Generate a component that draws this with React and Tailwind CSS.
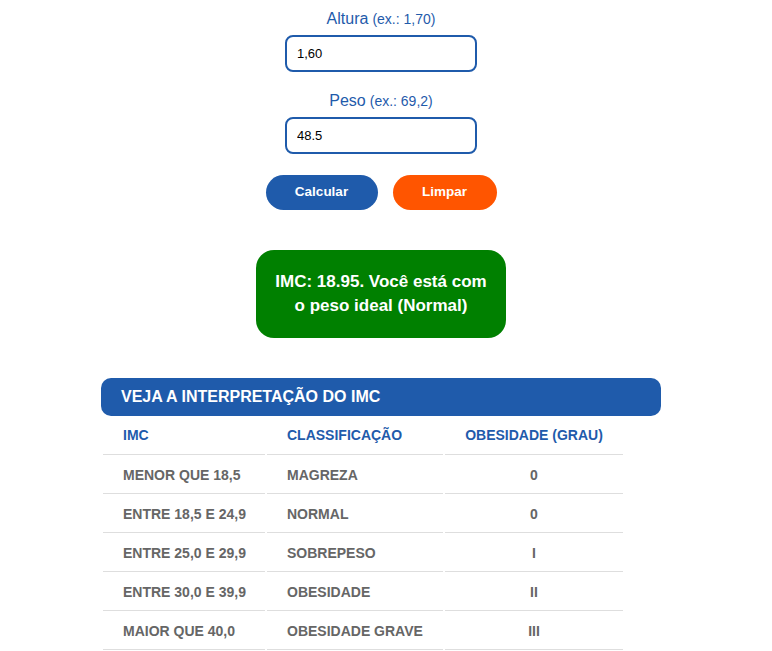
import { useState } from 'react';

const ROWS = [
  { imc: 'MENOR QUE 18,5', cls: 'MAGREZA', grau: '0' },
  { imc: 'ENTRE 18,5 E 24,9', cls: 'NORMAL', grau: '0' },
  { imc: 'ENTRE 25,0 E 29,9', cls: 'SOBREPESO', grau: 'I' },
  { imc: 'ENTRE 30,0 E 39,9', cls: 'OBESIDADE', grau: 'II' },
  { imc: 'MAIOR QUE 40,0', cls: 'OBESIDADE GRAVE', grau: 'III' },
];

export default function App() {
  const [altura, setAltura] = useState('1,60');
  const [peso, setPeso] = useState('48.5');

  return (
    <div className="w-[762px] bg-white font-['Liberation_Sans',Arial,sans-serif] flex flex-col items-center pt-[10px] pb-4">
      <label className="flex items-baseline gap-[4px] h-[18px] text-[16px] leading-[18px] text-[#1f5bab]">
        Altura <span className="text-[14px] leading-[18px]">(ex.: 1,70)</span>
      </label>
      <input
        type="text"
        value={altura}
        onChange={e => setAltura(e.target.value)}
        className="mt-[7px] w-[192px] h-[37px] border-2 border-[#1f5bab] rounded-[8px] pl-[10px] text-[13px] text-black outline-none"
      />

      <label className="mt-[20px] flex items-baseline gap-[4px] h-[18px] text-[16px] leading-[18px] text-[#1f5bab]">
        Peso <span className="text-[14px] leading-[18px]">(ex.: 69,2)</span>
      </label>
      <input
        type="text"
        value={peso}
        onChange={e => setPeso(e.target.value)}
        className="mt-[7px] w-[192px] h-[37px] border-2 border-[#1f5bab] rounded-[8px] pl-[10px] text-[13px] text-black outline-none"
      />

      <div className="mt-[21px] flex gap-[15px]">
        <button className="w-[112px] h-[35px] rounded-full bg-[#1f5bab] text-white text-[13.5px] font-bold">
          Calcular
        </button>
        <button className="w-[104px] h-[35px] rounded-full bg-[#ff5500] text-white text-[13.5px] font-bold">
          Limpar
        </button>
      </div>

      <div className="mt-[40px] w-[250px] h-[88px] rounded-[18px] bg-[#008000] text-white text-[17px] leading-[24px] font-bold text-center flex items-center justify-center px-4">
        IMC: 18.95. Você está com o peso ideal (Normal)
      </div>

      <div className="mt-[40px] w-[560px]">
        <div className="h-[38px] rounded-[10px] bg-[#1f5bab] text-white text-[16px] font-bold flex items-center pl-[20px]">
          VEJA A INTERPRETAÇÃO DO IMC
        </div>
        <table className="border-separate border-spacing-x-[2px] border-spacing-y-0 text-[14px] font-bold">
          <thead>
            <tr className="text-[#1f5bab]">
              <th className="w-[162px] h-[39px] text-left pl-[20px] border-b border-[#dedede] font-bold">IMC</th>
              <th className="w-[176px] h-[39px] text-left pl-[20px] border-b border-[#dedede] font-bold">CLASSIFICAÇÃO</th>
              <th className="w-[178px] h-[39px] text-center border-b border-[#dedede] font-bold">OBESIDADE (GRAU)</th>
            </tr>
          </thead>
          <tbody className="text-[#666666]">
            {ROWS.map(r => (
              <tr key={r.imc}>
                <td className="h-[39px] pl-[20px] pt-[2px] border-b border-[#dedede]">{r.imc}</td>
                <td className="h-[39px] pl-[20px] pt-[2px] border-b border-[#dedede]">{r.cls}</td>
                <td className="h-[39px] pt-[2px] text-center border-b border-[#dedede]">{r.grau}</td>
              </tr>
            ))}
          </tbody>
        </table>
      </div>
    </div>
  );
}
